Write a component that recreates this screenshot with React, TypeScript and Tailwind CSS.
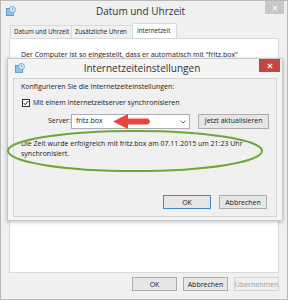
import React from 'react';

const font = { fontFamily: '"Open Sans", "Liberation Sans", sans-serif' };

// small "Datum und Uhrzeit" control panel icon
const ClockIcon = () => (
  <svg width="10" height="10" viewBox="0 0 10 10">
    <rect x="0.5" y="2.5" width="7" height="7" fill="#8ec6e8" stroke="#4a90c2" strokeWidth="0.8" />
    <circle cx="6.5" cy="3.5" r="3" fill="#d9eef9" stroke="#5a9dc8" strokeWidth="0.8" />
    <path d="M6.5 2v1.6l1 0.6" stroke="#2d6b98" strokeWidth="0.6" fill="none" />
  </svg>
);

const CloseX = ({ color }: { color: string }) => (
  <svg width="6" height="6" viewBox="0 0 6 6">
    <path d="M0.8 0.8L5.2 5.2M5.2 0.8L0.8 5.2" stroke={color} strokeWidth="1.2" />
  </svg>
);

const Btn = ({ label, primary, disabled, w }: { label: string; primary?: boolean; disabled?: boolean; w: string }) => (
  <div
    className={`${w} h-[14px] flex items-center justify-center text-[7px] leading-none border ${
      primary ? 'border-[#3c8ad0] bg-[#e6e6e6]' : disabled ? 'border-[#d4d4d4] bg-[#f0f0f0]' : 'border-[#adadad] bg-[#e6e6e6]'
    } ${disabled ? 'text-[#a0a0a0]' : 'text-[#1a1a1a]'}`}
  >
    {label}
  </div>
);

export default function App() {
  return (
    <div className="relative w-[288px] h-[300px] overflow-hidden bg-[#f0f0f0] border border-[#b9b9b9] text-[#1a1a1a]" style={font}>
      {/* outer window title bar */}
      <div className="flex items-start h-[22px]">
        <div className="pl-[5px] pt-[5px]"><ClockIcon /></div>
        <div className="flex-1 text-center pt-[3px] text-[10px] text-[#333]">Datum und Uhrzeit</div>
        <div className="w-[19px] h-[13px] mr-[3px] bg-[#c7c7c7] flex items-center justify-center"><CloseX color="#f4f4f4" /></div>
      </div>

      {/* tabs */}
      <div className="flex items-end h-[15px] pl-[9px] whitespace-nowrap text-[6.2px] leading-none">
        <div className="h-[13px] pl-[3px] w-[62px] flex items-center border border-[#d9d9d9] border-b-0 bg-[#f0f0f0]">Datum und Uhrzeit</div>
        <div className="h-[13px] pl-[3px] w-[61px] flex items-center border border-l-0 border-[#d9d9d9] border-b-0 bg-[#f0f0f0]">Zusätzliche Uhren</div>
        <div className="h-[15px] pl-[4px] w-[44px] flex items-center border border-l-0 border-[#d9d9d9] border-b-0 bg-white">Internetzeit</div>
      </div>

      {/* tab page */}
      <div className="mx-[8px] h-[235px] bg-white border border-[#d9d9d9] px-[11px] pt-[11px] text-[7px]">
        Der Computer ist so eingestellt, dass er automatisch mit "fritz.box"
      </div>

      {/* outer buttons */}
      <div className="flex justify-end gap-[6px] pr-[8px] pt-[4px]">
        <Btn label="OK" w="w-[45px]" />
        <Btn label="Abbrechen" w="w-[45px]" />
        <Btn label="Übernehmen" w="w-[45px]" disabled />
      </div>

      {/* inner dialog window */}
      <div className="absolute left-[6px] top-[57px] w-[276px] h-[163px] bg-[#f4f4f4] border border-[#c8c8c8] shadow-[0_1px_4px_rgba(0,0,0,0.25)] flex flex-col">
        <div className="flex items-start h-[19px]">
          <div className="pl-[7px] pt-[4px]"><ClockIcon /></div>
          <div className="flex-1 text-center pt-[2px] text-[10px] text-[#333]">Internetzeiteinstellungen</div>
          <div className="w-[21px] h-[13px] mr-[2px] bg-[#c7453f] flex items-center justify-center"><CloseX color="#ffffff" /></div>
        </div>
        <div className="mx-[5px] h-[139px] bg-[#f0f0f0] border border-[#d5d5d5] px-[7px] pt-[3px] text-[7px] flex flex-col">
          <div>Konfigurieren Sie die Internetzeiteinstellungen:</div>
          <div className="flex items-center gap-[3px] mt-[5px] ml-[1px]">
            <div className="w-[8px] h-[8px] bg-white border border-[#333] flex items-center justify-center">
              <svg width="6" height="6" viewBox="0 0 6 6"><path d="M0.8 3.2L2.3 4.7L5.2 1.2" stroke="#111" strokeWidth="1" fill="none" /></svg>
            </div>
            <span>Mit einem Internetzeitserver synchronisieren</span>
          </div>
          <div className="flex items-center mt-[6px] ml-[27px]">
            <span className="w-[23px]">Server:</span>
            <div className="w-[120px] h-[15px] bg-white border border-[#abadb3] flex items-center justify-between pl-[4px] pr-[3px]">
              <span>fritz.box</span>
              <svg width="6" height="4" viewBox="0 0 6 4"><path d="M0.5 0.5L3 3L5.5 0.5" stroke="#444" strokeWidth="0.8" fill="none" /></svg>
            </div>
            <div className="ml-[8px] w-[71px] h-[15px] bg-[#e6e6e6] border border-[#adadad] flex items-center justify-center">Jetzt aktualisieren</div>
          </div>
          <div className="mt-[10px] leading-[10px]">
            Die Zeit wurde erfolgreich mit fritz.box am 07.11.2015 um 21:23 Uhr<br />synchronisiert.
          </div>
          <div className="mt-auto mb-[7px] flex justify-end gap-[8px] pr-[2px]">
            <Btn label="OK" w="w-[48px]" primary />
            <Btn label="Abbrechen" w="w-[48px]" />
          </div>
        </div>
      </div>

      {/* annotations */}
      <svg className="absolute left-0 top-0 pointer-events-none" width="288" height="300">
        <ellipse cx="134" cy="150" rx="127" ry="20" fill="none" stroke="#6aa838" strokeWidth="2" />
        <path d="M112 120.5L127 113L127 117.5L147 117.5Q151 120.5 147 123.5L127 123.5L127 128Z" fill="#e8453c" />
      </svg>
    </div>
  );
}
